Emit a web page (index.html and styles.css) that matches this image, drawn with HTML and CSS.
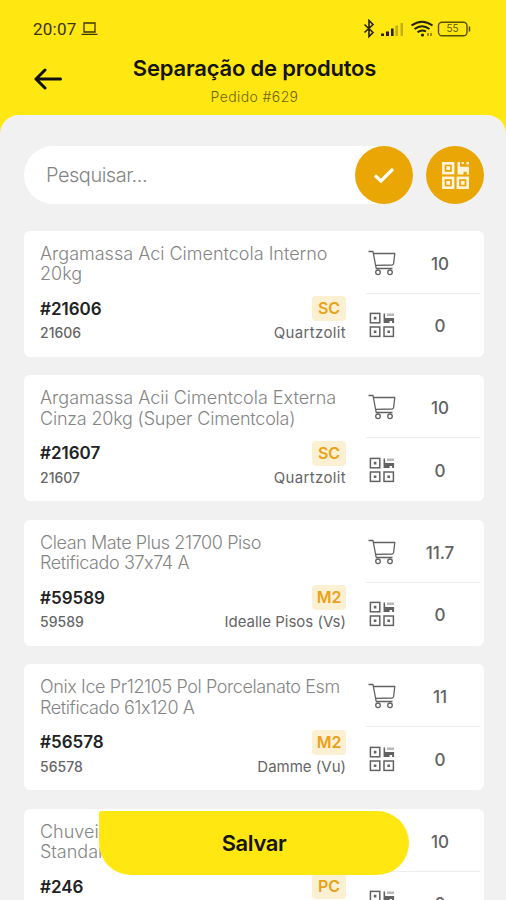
FILE: index.html
```html
<!DOCTYPE html>
<html lang="pt-BR">
<head>
<meta charset="utf-8">
<title>Separação de produtos</title>
<link rel="stylesheet" href="styles.css">
</head>
<body>
<svg class="defs" aria-hidden="true">
  <symbol id="cart" viewBox="0 0 28 26">
    <path d="M.5 1.500H5L8.200 18.500H24.500M5.300 3.500H26.800L25.600 13.500Q25.400 14.900 24 15L7.600 15.300" fill="none" stroke="currentColor" stroke-width="1.300" stroke-linejoin="round"/>
    <circle cx="10" cy="22.300" r="2.300" fill="none" stroke="currentColor" stroke-width="1.300"/>
    <circle cx="22" cy="22.300" r="2.300" fill="none" stroke="currentColor" stroke-width="1.300"/>
  </symbol>
  <symbol id="qr" viewBox="0 0 26 26">
    <g fill="none" stroke="currentColor" stroke-width="1.500">
      <rect x="1.400" y="1.400" width="9.400" height="9.400"/><rect x="1.400" y="15" width="9.400" height="9.400"/><rect x="15" y="15" width="9.400" height="9.400"/>
    </g>
    <path d="M4.800 4.800h2.600v2.600h-2.600zM4.800 18.400h2.600v2.600h-2.600zM18.400 18.400h2.600v2.600h-2.600zM14.500 1.500h1.600v4.500h9v5h-2v-2h-2.500v2h-6z" fill="currentColor"/>
    <path d="M18 1.500h7v2.500h-7z" fill="currentColor" opacity=".45"/>
  </symbol>
  <symbol id="qr-bold" viewBox="0 0 26 26">
    <g fill="none" stroke="currentColor" stroke-width="2.500">
      <rect x="1.300" y="1.300" width="9.400" height="9.400"/><rect x="1.300" y="15.300" width="9.400" height="9.400"/><rect x="15.300" y="15.300" width="9.400" height="9.400"/>
    </g>
    <path d="M4.200 4.200h3.600v3.600H4.200zM4.200 18.200h3.600v3.600H4.200zM18.200 18.200h3.600v3.600h-3.600zM15 0h2.300v4.500H26V12h-2.200V9.500h-3V12H15zM19 0h2v2h-2zM23.500 0H26v2.300h-2.500z" fill="currentColor"/>
  </symbol>
</svg>
<div class="screen">
  <div class="status">
    <span class="clock">20:07</span>
    <svg class="laptop" viewBox="0 0 17 14"><path d="M3 1H14V10H3ZM.5 12.400H16.500" fill="none" stroke="currentColor" stroke-width="1.300"/></svg>
    <svg class="indicators" viewBox="0 0 110 20">
      <g fill="none" stroke="#252205" stroke-width="1.600">
        <path d="M2.500 5.500L11 13.500 7 17.500V1.500L11 5.500 2.500 13.500"/>
        <path d="M49.500 6.500Q60 -1 70.500 6.500M52.500 10Q60 4.500 67.500 10M55.500 13.200Q60 10 64 12.500" stroke-width="2"/>
      </g>
      <path d="M19 14.500h3V17h-3zM24 12.500h3V17h-3zM29 9.500h2.600V17H29z" fill="#252205"/>
      <path d="M33.300 6.500h2.700V17h-2.700zM38.500 4h2.500v13h-2.500z" fill="#c4b20b"/>
      <circle cx="60.500" cy="16" r="1.600" fill="#252205"/>
      <path d="M66 17v-3M69 17v-3" stroke="#776b08" stroke-width="1.400"/>
      <rect x="76.500" y="3.300" width="28.500" height="13.400" rx="3.500" fill="none" stroke="#575008" stroke-width="1.400"/>
      <path d="M107.500 7.500v5" stroke="#575008" stroke-width="1.500"/>
      <text x="90.500" y="13.300" text-anchor="middle" class="battery">55</text>
    </svg>
  </div>
  <header class="header">
    <svg class="back" viewBox="0 0 28 22"><path d="M26.500 11H2M11 2L2 11L11 20" fill="none" stroke="#111" stroke-width="3" stroke-linecap="round" stroke-linejoin="round"/></svg>
    <div class="heading">
      <h1>Separação de produtos</h1>
      <p>Pedido #629</p>
    </div>
  </header>
  <main class="sheet">
    <div class="tools">
      <div class="search"><span>Pesquisar...</span>
        <button class="round"><svg class="check" viewBox="0 0 22 18"><path d="M2 9.500L8 15L20 3" fill="none" stroke="#fff" stroke-width="3.200"/></svg></button>
      </div>
      <button class="round"><svg class="scan"><use href="#qr-bold"/></svg></button>
    </div>
    <div class="list">
      <article class="card">
        <div class="info">
          <h2>Argamassa Aci Cimentcola Interno<br>20kg</h2>
          <div class="row"><strong>#21606</strong><b class="unit">SC</b></div>
          <div class="row sub"><span class="code">21606</span><span class="brand-wide">Quartzolit</span></div>
        </div>
        <div class="counts"><div><svg class="cart"><use href="#cart"/></svg><span>10</span></div><div><svg class="qr"><use href="#qr"/></svg><span>0</span></div></div>
      </article>
      <article class="card">
        <div class="info">
          <h2>Argamassa Acii Cimentcola Externa<br><span class="snug">Cinza 20kg (Super Cimentcola)</span></h2>
          <div class="row"><strong>#21607</strong><b class="unit">SC</b></div>
          <div class="row sub"><span class="code">21607</span><span class="brand-wide">Quartzolit</span></div>
        </div>
        <div class="counts"><div><svg class="cart"><use href="#cart"/></svg><span>10</span></div><div><svg class="qr"><use href="#qr"/></svg><span>0</span></div></div>
      </article>
      <article class="card">
        <div class="info">
          <h2 class="tight">Clean Mate Plus 21700 Piso<br>Retificado 37x74 A</h2>
          <div class="row"><strong>#59589</strong><b class="unit">M2</b></div>
          <div class="row sub"><span class="code">59589</span><span>Idealle Pisos (Vs)</span></div>
        </div>
        <div class="counts"><div><svg class="cart"><use href="#cart"/></svg><span>11.7</span></div><div><svg class="qr"><use href="#qr"/></svg><span>0</span></div></div>
      </article>
      <article class="card">
        <div class="info">
          <h2 class="tight">Onix Ice Pr12105 Pol Porcelanato Esm<br>Retificado 61x120 A</h2>
          <div class="row"><strong>#56578</strong><b class="unit">M2</b></div>
          <div class="row sub"><span class="code">56578</span><span>Damme (Vu)</span></div>
        </div>
        <div class="counts"><div><svg class="cart"><use href="#cart"/></svg><span>11</span></div><div><svg class="qr"><use href="#qr"/></svg><span>0</span></div></div>
      </article>
      <article class="card">
        <div class="info">
          <h2>Chuvei<br>Standar</h2>
          <div class="row"><strong>#246</strong><b class="unit">PC</b></div>
        </div>
        <div class="counts"><div><svg class="cart"><use href="#cart"/></svg><span>10</span></div><div><svg class="qr"><use href="#qr"/></svg><span>0</span></div></div>
      </article>
    </div>
  </main>
  <button class="save">Salvar</button>
</div>
</body>
</html>
```
FILE: styles.css
```css
* { box-sizing: border-box; }
body { margin: 0; font-family: Inter, "Liberation Sans", sans-serif; font-feature-settings: "calt" 0; overflow: hidden; }
h1, h2, p { margin: 0; }
button { border: 0; padding: 0; font-family: inherit; }
.defs { position: absolute; width: 0; height: 0; }
.screen { position: relative; width: 506px; height: 900px; overflow: hidden; background: #ffe712; }
.status { height: 50px; padding: 7px 34px 0 33px; display: flex; align-items: center; color: #3a350a; }
.clock { font-family: Roboto, sans-serif; font-size: 17px; letter-spacing: .25px; }
.laptop { width: 17px; height: 14px; margin-left: 4px; }
.indicators { width: 110px; height: 20px; margin-left: auto; }
.battery { font-size: 10px; fill: #5f5708; }
.header { height: 65px; position: relative; }
.back { position: absolute; left: 34px; top: 18px; width: 28px; height: 22px; }
.heading { text-align: center; padding-left: 3px; }
.heading h1 { padding-top: 4px; font-size: 22px; line-height: 28px; font-weight: 600; letter-spacing: -.2px; color: #15140a; }
.heading p { padding-top: 6px; font-size: 14px; line-height: 18px; font-weight: 300; letter-spacing: .4px; color: #6d6410; }
.sheet { height: 785px; overflow: hidden; background: #f1f1f1; border-radius: 19px 19px 0 0; padding: 31px 22px 0 24px; }
.tools { display: flex; justify-content: space-between; height: 58px; }
.search { width: 389px; height: 58px; border-radius: 29px; background: #fff; display: flex; align-items: center; justify-content: space-between; padding-left: 22px; font-size: 20px; font-weight: 300; letter-spacing: -.5px; color: #858585; }
.round { width: 58px; height: 58px; border-radius: 50%; background: #eaa605; color: #fff5df; display: grid; place-items: center; }
.check { width: 22px; height: 18px; }
.scan { width: 27px; height: 27px; }
.list { padding-top: 26.500px; display: grid; gap: 18.500px; width: 460px; }
.card { height: 126px; border-radius: 6px; background: #fff; display: flex; }
.info { width: 342px; padding: 13px 20px 0 16px; }
.info h2 { font-size: 18px; line-height: 20.500px; height: 41px; font-weight: 300; color: #858585; white-space: nowrap; }
.info h2.tight { letter-spacing: -.4px; }
.snug { letter-spacing: -.2px; }
.row { display: flex; align-items: center; justify-content: space-between; height: 26px; margin-top: 11px; }
.row strong { font-size: 17px; font-weight: 600; color: #222; }
.unit { width: 34px; height: 25px; border-radius: 4px; background: #fcf0d2; color: #e9a21b; font-size: 16px; line-height: 25px; font-weight: 600; text-align: center; }
.sub { height: 22px; margin-top: 0; font-size: 15px; color: #666; }
.brand-wide { letter-spacing: .35px; }
.code { font-size: 14px; font-weight: 500; }
.counts { width: 114px; display: grid; grid-template-rows: 63px 63px; }
.counts div { display: flex; align-items: center; padding-left: 2px; color: #626262; }
.counts div:first-child { border-bottom: 1px solid #eee; padding-top: 2px; }
.counts span { width: 60px; margin-left: auto; margin-right: 10px; padding-top: 2px; text-align: center; font-size: 17px; font-weight: 500; }
.cart { width: 28px; height: 26px; }
.qr { width: 26px; height: 26px; margin-left: 1px; }
.save { position: absolute; left: 99px; top: 811px; width: 310px; height: 64px; border-radius: 2px 32px 32px 32px; background: #ffe712; color: #15140a; font-size: 22px; font-weight: 600; letter-spacing: -.4px; }
```
